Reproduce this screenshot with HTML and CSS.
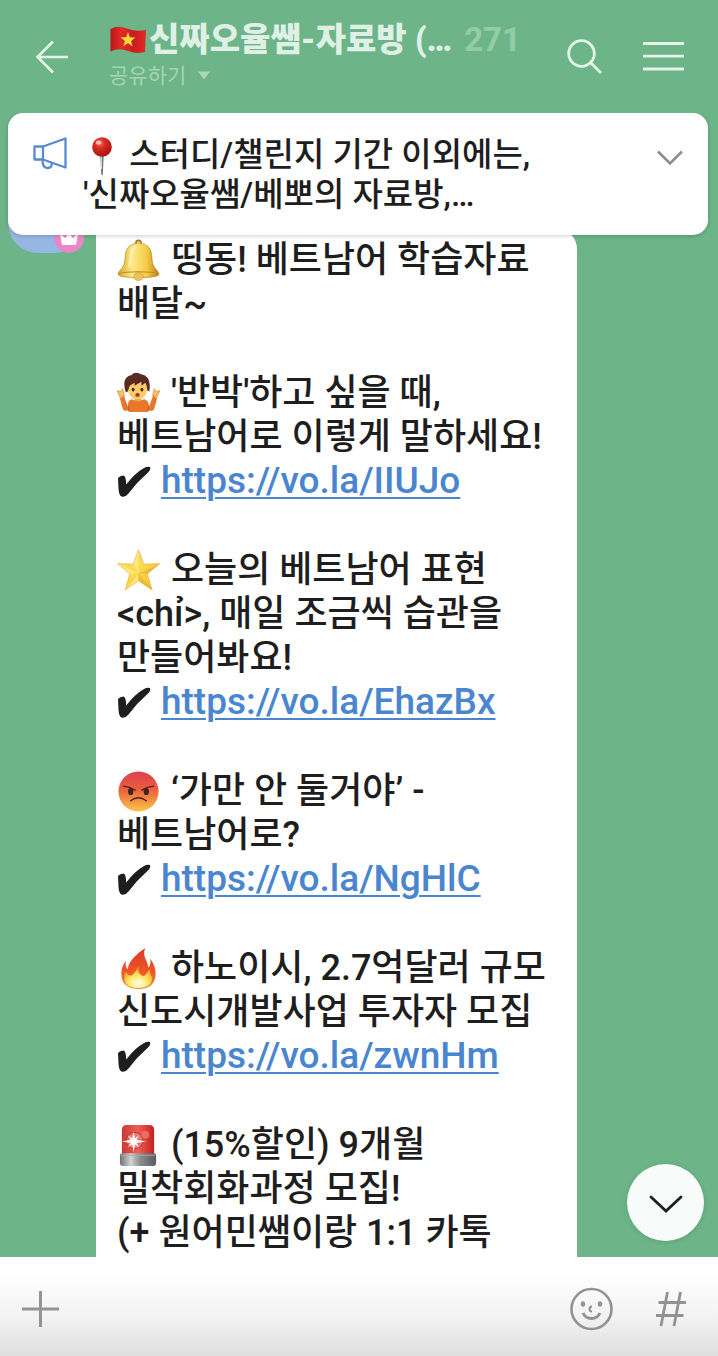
FILE: index.html
```html
<!DOCTYPE html>
<html lang="ko">
<head>
<meta charset="utf-8">
<meta name="viewport" content="width=device-width, initial-scale=1">
<title>신짜오율쌤-자료방</title>
<link rel="stylesheet" href="styles.css">
</head>
<body>
<svg class="defs" aria-hidden="true">
  <defs>
    <linearGradient id="gold" x1="0" x2="1"><stop offset="0" stop-color="#d9a520"/><stop offset=".35" stop-color="#ffe98a"/><stop offset=".7" stop-color="#f5cb45"/><stop offset="1" stop-color="#b9821a"/></linearGradient>
    <linearGradient id="star" x1="0" y1="0" x2="1" y2="1"><stop offset="0" stop-color="#fbe069"/><stop offset=".5" stop-color="#fbd94f"/><stop offset="1" stop-color="#eeb52f"/></linearGradient>
    <linearGradient id="rage" x1="0" y1="0" x2="0" y2="1"><stop offset="0" stop-color="#de3f4d"/><stop offset=".45" stop-color="#e9603f"/><stop offset="1" stop-color="#fbc648"/></linearGradient>
    <linearGradient id="flame" x1="0" y1="0" x2="0" y2="1"><stop offset="0" stop-color="#d93a25"/><stop offset=".55" stop-color="#ee5428"/><stop offset="1" stop-color="#f08a30"/></linearGradient>
    <radialGradient id="core" cx=".5" cy=".75" r=".6"><stop offset="0" stop-color="#fffbd8"/><stop offset=".6" stop-color="#fde65a"/><stop offset="1" stop-color="#f8ae3a"/></radialGradient>
    <linearGradient id="steel" x1="0" x2="1"><stop offset="0" stop-color="#6f7072"/><stop offset=".3" stop-color="#d3d4d5"/><stop offset=".55" stop-color="#8d8e90"/><stop offset="1" stop-color="#58595b"/></linearGradient>
    <linearGradient id="lamp" x1="0" x2="1"><stop offset="0" stop-color="#c93a37"/><stop offset=".5" stop-color="#ef5d55"/><stop offset="1" stop-color="#c5221f"/></linearGradient>
    <linearGradient id="flag" x1="0" x2="1"><stop offset="0" stop-color="#b9161b"/><stop offset=".3" stop-color="#e32a26"/><stop offset=".65" stop-color="#c81d1e"/><stop offset="1" stop-color="#e12a29"/></linearGradient>
    <radialGradient id="ball" cx=".38" cy=".3" r=".75"><stop offset="0" stop-color="#f47a6c"/><stop offset=".35" stop-color="#d92b22"/><stop offset="1" stop-color="#a80f10"/></radialGradient>
    <symbol id="check" viewBox="0 0 34 32"><path fill="#1e1e1e" d="M1 12Q3 9.500 6.500 9.500 9 10 9.200 18.500 18 7 27 2 30 .3 33 1 34 3.500 31 6.500 20 16 11.500 27.500 8.500 31.500 4.500 30.500 2 29.500 1.500 23Z"/></symbol>
  </defs>
</svg>
<div class="app">
  <header class="header">
    <button class="icon-btn back" aria-label="뒤로"><svg width="34" height="34" viewBox="0 0 34 34" fill="none" stroke="#e4f5ea" stroke-width="2.600"><path d="M18 1.500 2.500 17 18 32.500M2 17H33"/></svg></button>
    <div class="heading">
      <div class="title-row">
        <svg class="flag" width="38" height="28" viewBox="0 0 38 28" role="img" aria-label="베트남 국기"><path fill="url(#flag)" d="M1.500 3Q9-1 18 2.500T37 4L36 26Q28 28.500 19 25T1.500 25.500Z"/><path fill="#ffd93b" d="m19 6 1.900 5.300 5.600.2-4.400 3.500 1.500 5.500-4.600-3.200-4.700 3 1.700-5.400-4.400-3.600 5.600-.1z"/></svg>
        <h1 class="title">신짜오율쌤-자료방 (…</h1>
        <span class="count">271</span>
      </div>
      <button class="share">공유하기<svg width="12" height="9" viewBox="0 0 12 9"><path fill="#a9d7b9" d="M0 .5h12L6 8.500z"/></svg></button>
    </div>
    <button class="icon-btn" aria-label="검색"><svg width="36" height="36" viewBox="0 0 36 36" fill="none" stroke="#e4f5ea" stroke-width="2.800"><circle cx="14.500" cy="14.500" r="12.800"/><path d="m23.500 23.500 10.500 10.500"/></svg></button>
    <button class="icon-btn" aria-label="메뉴"><svg width="41" height="32" viewBox="0 0 41 32" stroke="#e4f5ea" stroke-width="2.800"><path d="M0 2.500h41M0 15.200h41M0 28h41"/></svg></button>
  </header>

  <main class="room">
    <section class="notice" aria-label="공지">
      <svg class="horn" width="35" height="34" viewBox="0 0 35 34" fill="none" stroke="#578bd0" stroke-width="2.300" stroke-linejoin="round"><path d="M1.500 9.500h8.500v13H1.500zM10 9.500 32.500 1.500v29L10 22.500M9.500 23Q9.500 31 14.500 31T18.500 26"/></svg>
      <p class="notice-text"><svg class="pin" width="38" height="40" viewBox="0 0 38 40" role="img" aria-label="핀"><path fill="#77777a" d="M17.200 17h3.600l-1 21-.8 2-.8-2z"/><path stroke="#d8d8da" d="M18.500 18v15"/><circle cx="19" cy="11" r="9.800" fill="url(#ball)"/><ellipse cx="15.500" cy="6.500" rx="2.800" ry="2" fill="#fff" opacity=".55"/></svg> 스터디/챌린지 기간 이외에는,<br>'신짜오율쌤/베뽀의 자료방,…</p>
      <button class="icon-btn" aria-label="펼치기"><svg width="26" height="16" viewBox="0 0 26 16" fill="none" stroke="#8d8d8d" stroke-width="2.600"><path d="m1 1.500 12 12 12-12"/></svg></button>
    </section>

    <article class="message">
      <div class="avatar">
        <span class="badge"><svg width="18" height="14" viewBox="0 0 18 14"><path fill="#fff" d="m0 3 5.500 4L9 1l3.500 6L18 3l-2 11H2z"/></svg></span>
      </div>
      <div class="bubble">
        <p><svg class="emoji" viewBox="0 0 44 44" role="img" aria-label="종"><circle cx="22" cy="4" r="2.500" fill="none" stroke="#a77f2b" stroke-width="2"/><path fill="url(#gold)" stroke="#bb8b25" stroke-width=".7" d="M22 4Q9 5 8.500 17 8 27 5 30 1 34 1 36 1 39.500 22 39.500T43 36Q43 34 39 30 36 27 35.500 17 35 5 22 4Z"/><path fill="none" stroke="#b98a2a" stroke-width="1.200" d="M2 35.500Q7 33.500 22 33.500T42 35.500"/><path fill="#fff7c5" opacity=".7" d="M14 11q4-5 6-3-5 5-6 20l-3 1q1-6 3-18z"/><ellipse cx="22" cy="38.500" rx="4.800" ry="4" fill="#eec358" stroke="#c4932f" stroke-width=".6"/></svg> 띵동! 베트남어 학습자료<br>배달~</p>
        <p><svg class="emoji" viewBox="0 0 44 44" role="img" aria-label="어깨를 으쓱하는 사람"><path fill="#e9782d" d="M15 28Q21 31 28 28 32 29 33 35L37 24 41 27 38 38Q36 41 32 39V41H12V39Q8 41 6 38L3 27 7 24 11 35Q11 29 15 28Z"/><path fill="none" stroke="#bd561c" stroke-width="1" d="M12 40v-5M32 40v-5"/><path fill="#f3bf62" stroke="#c98b37" stroke-width=".6" d="M3 26 0 19l4 1 2-3 1 5 1 2zM41 26l3-7-4 1-2-3-1 5-1 2z"/><path fill="#e4a64e" d="M18 25h7v4q-3 3-7 0z"/><path fill="#fbcb6b" d="M11 14Q11 28 21 28T31 14Q30 6 21 6T11 14Z"/><path fill="#5a2a20" d="M9 21Q4 5 15 3 18-1 24 2 36 4 33 20L31 19Q31 14 29 11L25 14 25 10 18 14 18 11 13 14 11 20Z"/><ellipse cx="16.500" cy="18" rx="1.500" ry="2" fill="#46261a"/><ellipse cx="25.500" cy="18" rx="1.500" ry="2" fill="#46261a"/><ellipse cx="21" cy="23.500" rx="2.300" ry="1.900" fill="#9a3823"/></svg> '반박'하고 싶을 때,<br>베트남어로 이렇게 말하세요!<br><svg class="check" role="img" aria-label="체크"><use href="#check"/></svg> <a href="https://vo.la/IIUJo">https://vo.la/IIUJo</a></p>
        <p><svg class="emoji" viewBox="0 0 44 44" role="img" aria-label="별"><path fill="url(#star)" stroke="#e8b640" stroke-width=".8" stroke-linejoin="round" d="m22 1 5.500 14.500 16-.5L31 25.500 36 42 22 32.500 8.500 42 13 25.500.5 15 16.500 15.500z"/><path fill="#fff3a5" opacity=".5" d="M22 1v24l-5.500-9.500zM.5 15 22 25l-9 .5zM8.500 42 22 25v7.500z"/><path fill="#dda224" opacity=".4" d="M43.500 15 22 25l9 .5zM36 42 22 25v7.500z"/></svg> 오늘의 베트남어 표현<br>&lt;chỉ&gt;, 매일 조금씩 습관을<br>만들어봐요!<br><svg class="check" role="img" aria-label="체크"><use href="#check"/></svg> <a href="https://vo.la/EhazBx">https://vo.la/EhazBx</a></p>
        <p><svg class="emoji" viewBox="0 0 44 44" role="img" aria-label="화난 얼굴"><circle cx="22" cy="22" r="20.500" fill="url(#rage)"/><ellipse cx="14" cy="22" rx="2.700" ry="3.700" fill="#43211d"/><ellipse cx="30" cy="22" rx="2.700" ry="3.700" fill="#43211d"/><path fill="none" stroke="#552019" stroke-width="1.500" stroke-linecap="round" d="M6.500 16.500Q13 17 18.500 20.500M37.500 16.500Q31 17 25.500 20.500M14 31.500Q22 25.500 30 31.500"/></svg> ‘가만 안 둘거야’ -<br>베트남어로?<br><svg class="check" role="img" aria-label="체크"><use href="#check"/></svg> <a href="https://vo.la/NgHlC">https://vo.la/NgHlC</a></p>
        <p><svg class="emoji" viewBox="0 0 44 44" role="img" aria-label="불"><path fill="url(#flame)" d="M29 1Q26 7 30 14 32 18 32 21 35 19 34 12 40 20 39.500 29 38 43 22 43 5 43 4.500 28 4 21 9 14 8 20 11 23 11 17 18 10 24 4 29 1Z"/><path fill="url(#core)" d="M22 20Q21 26 25 29 28 31 30 27 32 24 34 23 33 27 36 31 36 42 22 42 8 42 7.500 33 7 28 9 25 11 30 15 29 18 27 22 20Z"/><path fill="#fffbe5" opacity=".4" d="M13 34q5 3 9-3 4 7 9 3-1 8-9 8t-9-8z"/></svg> 하노이시, 2.7억달러 규모<br>신도시개발사업 투자자 모집<br><svg class="check" role="img" aria-label="체크"><use href="#check"/></svg> <a href="https://vo.la/zwnHm">https://vo.la/zwnHm</a></p>
        <p><svg class="emoji" viewBox="0 0 44 44" role="img" aria-label="경광등"><path fill="url(#lamp)" d="M5 32V6Q5 1 10 1H33Q38 1 38 6V32Z"/><circle cx="18" cy="17" r="8.500" fill="#e98d86" opacity=".6" stroke="#a3201f"/><circle cx="29" cy="11" r="4" fill="#f57d76" opacity=".7"/><path fill="#fff" opacity=".95" d="m17 8 1.500 6.500 4-3-2.500 4.500 10 2-10 1.500 3 4.500-4.500-3-1.500 8-1.500-8-4.500 3 3-4.500-9-1.500 9-2-3-4.500 4.500 3z"/><path fill="url(#steel)" d="M5 30H38Q40 30 40 33V40Q40 43 37 43H6Q3 43 3 40V33Q3 30 5 30Z"/><path stroke="#a6a7a9" d="M4 32h35"/></svg> (15%할인) 9개월<br>밀착회화과정 모집!<br>(+ 원어민쌤이랑 1:1 카톡</p>
      </div>
    </article>

    <button class="to-bottom" aria-label="맨 아래로"><svg width="34" height="20" viewBox="0 0 34 20" fill="none" stroke="#202020" stroke-width="2.800" stroke-linecap="round"><path d="m2 4 15 14L32 4"/></svg></button>
  </main>

  <footer class="composer">
    <button class="icon-btn add" aria-label="첨부"><svg width="38" height="38" viewBox="0 0 38 38" stroke="#949497" stroke-width="3"><path d="M19.500 1v36M1 19h37"/></svg></button>
    <button class="icon-btn" aria-label="이모티콘"><svg width="44" height="44" viewBox="0 0 44 44" fill="none" stroke="#929295" stroke-width="2.600"><circle cx="22.500" cy="22" r="20"/><path stroke-width="3" d="M14 26Q16.500 31.500 22.500 31.500T31 26"/><path stroke-width="2" d="M23 19.500Q20.500 19.500 20.500 22T23 24.500"/><ellipse cx="14" cy="17" rx="2.200" ry="2.800" fill="#929295" stroke="none"/><ellipse cx="31" cy="17" rx="2.200" ry="2.800" fill="#929295" stroke="none"/></svg></button>
    <button class="icon-btn" aria-label="샵 검색"><svg width="30" height="36" viewBox="0 0 30 36" stroke="#929295" stroke-width="2.800"><path d="M11.500 1 5 35M24.500 1 18 35M2.500 11.500H30M0 24.500H27.500"/></svg></button>
  </footer>
</div>
</body>
</html>
```
FILE: styles.css
```css
* { box-sizing: border-box; }

body {
  margin: 0;
  font-family: Roboto, "Noto Sans CJK KR", sans-serif;
  color: #1e1e1e;
}

p, h1 { margin: 0; }

svg { flex: none; }

button {
  margin: 0;
  padding: 0;
  border: 0;
  background: none;
  font: inherit;
  color: inherit;
  cursor: pointer;
}

.defs {
  position: absolute;
  width: 0;
  height: 0;
}

.app {
  display: flex;
  flex-direction: column;
  height: 100vh;
  background: #6db588;
}

.header {
  display: flex;
  align-items: center;
  gap: 40px;
  flex: none;
  height: 113px;
  padding: 0 34px 0 35px;
}

.icon-btn {
  display: flex;
  flex: none;
}

.heading {
  flex: 1;
  min-width: 0;
  padding-bottom: 2px;
}

.title-row {
  display: flex;
  align-items: center;
  height: 40px;
  white-space: nowrap;
}

.title {
  margin-left: 2px;
  font-size: 33px;
  line-height: 40px;
  font-weight: 900;
  color: #dff1e6;
}

.count {
  margin-left: 12px;
  font-size: 33px;
  line-height: 40px;
  font-weight: 700;
  color: #94cba8;
}

.share {
  display: flex;
  align-items: center;
  gap: 12px;
  font-size: 21px;
  line-height: 32px;
  color: #a4d4b5;
}

.room {
  position: relative;
  flex: 1;
  min-height: 0;
  overflow: hidden;
}

.notice {
  position: absolute;
  z-index: 1;
  top: 0;
  left: 8px;
  right: 10px;
  display: flex;
  align-items: flex-start;
  padding: 23px 25px 21px 25px;
  border-radius: 15px;
  background: #fff;
  box-shadow: 0 1px 4px rgba(0, 0, 0, 0.2);
}

.horn { margin-top: 1px; }

.notice-text {
  flex: 1;
  margin-left: 15px;
  font-size: 33px;
  line-height: 38px;
  font-weight: 500;
}

.notice .icon-btn { margin-top: 14px; }

.pin { vertical-align: -10px; }

.message {
  display: flex;
  height: 100%;
  padding-top: 116px;
}

.avatar {
  position: relative;
  flex: none;
  width: 76px;
  height: 76px;
  margin: -52px 12px 0 8px;
  border-radius: 30px;
  background: #96b7e3;
}

.badge {
  position: absolute;
  right: 0;
  bottom: 0;
  display: grid;
  place-items: center;
  width: 30px;
  height: 30px;
  border-radius: 50%;
  background: #e988c8;
}

.bubble {
  flex: none;
  width: 67%;
  padding: 9px 10px 0 21px;
  border-radius: 0 20px 0 0;
  background: #fff;
  font-size: 36px;
  line-height: 44px;
  font-weight: 500;
  white-space: nowrap;
}

.bubble p + p { margin-top: 45px; }

.bubble a {
  font-size: 37px;
  color: #4a86d0;
  text-decoration: underline;
  text-decoration-thickness: 2px;
  text-underline-offset: 4px;
}

.emoji {
  width: 43px;
  height: 43px;
  margin-right: 2px;
  vertical-align: -10px;
}

.check {
  width: 34px;
  height: 32px;
  margin-right: 1px;
  vertical-align: -5px;
}

.to-bottom {
  position: absolute;
  right: 14px;
  bottom: 16px;
  display: grid;
  place-items: center;
  width: 77px;
  height: 77px;
  border-radius: 50%;
  background: #f7fbfa;
  box-shadow: 0 1px 6px rgba(0, 0, 0, 0.12);
}

.composer {
  display: flex;
  align-items: center;
  gap: 43px;
  flex: none;
  height: 99px;
  padding: 4px 32px 0 21px;
  background: linear-gradient(#fff 15%, #f3f3f3 60%, #dedede);
}

.add { margin-right: auto; }
```
